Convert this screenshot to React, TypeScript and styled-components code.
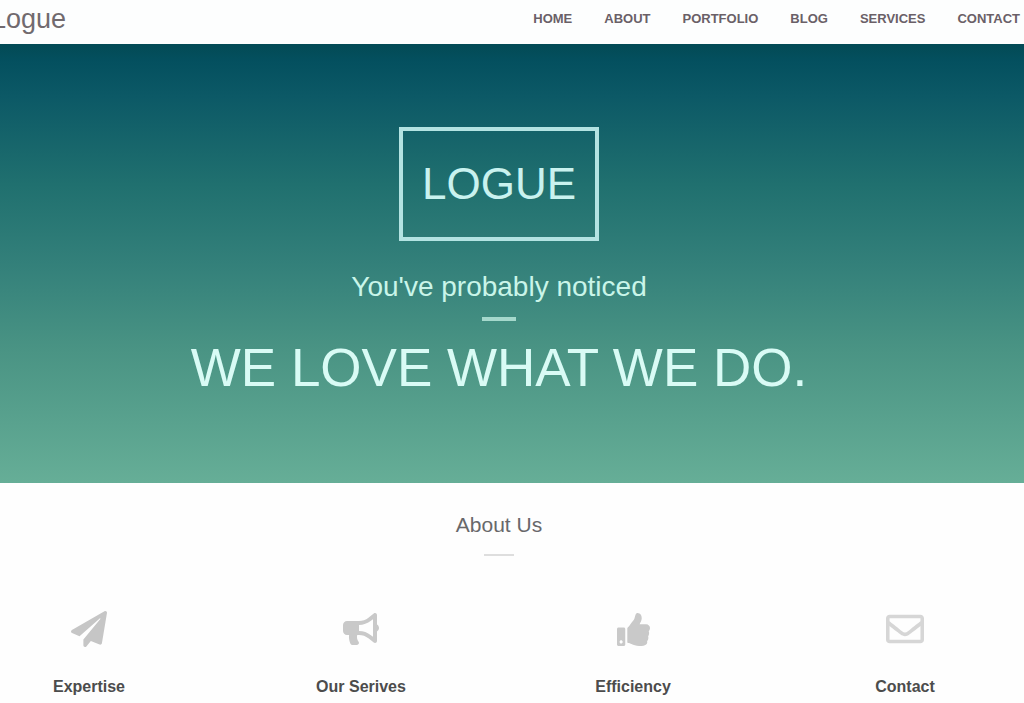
import React from "react";
import styled, { createGlobalStyle } from "styled-components";
import { FaPaperPlane, FaBullhorn, FaThumbsUp, FaRegEnvelope } from "react-icons/fa";

const GlobalStyle = createGlobalStyle`
  * { box-sizing: border-box; }
  body {
    margin: 0;
    overflow-x: hidden;
    background: #fefefe;
    font-family: "Liberation Sans", Arial, sans-serif;
  }
`;

const Page = styled.div`
  overflow: hidden;
`;

const Header = styled.header`
  display: flex;
  align-items: center;
  justify-content: space-between;
  height: 44px;
  padding: 0 4px 7px 0;
  background: #fdfefe;
`;

const Brand = styled.a`
  margin-left: -9px;
  color: #716a6e;
  font-size: 27px;
  line-height: 36px;
  text-decoration: none;
`;

const Nav = styled.nav`
  display: flex;
  gap: 32px;
`;

const NavLink = styled.a`
  color: #6a6067;
  font-size: 13px;
  font-weight: 700;
  line-height: 16px;
  text-decoration: none;
`;

const Hero = styled.section`
  display: flex;
  flex-direction: column;
  align-items: center;
  padding: 83px 26px 83px 0;
  color: #d9fbf5;
  text-align: center;
  background: linear-gradient(#034a55 0%, #04505f 4%, #0c5966 12%, #20706f 32%, #33807a 50%, #4a9484 70%, #66ae97 100%);
`;

const LogoBox = styled.div`
  padding: 29px 19px;
  border: 4px solid #b3e3e2;
  color: #c9f2ef;
  font-size: 44px;
  line-height: 48px;
`;

const Tagline = styled.p`
  margin: 29px 0 13px;
  color: #c9f5e9;
  font-size: 28px;
  line-height: 34px;
`;

const Rule = styled.hr<{ $color: string; $width: number; $thickness: number }>`
  width: ${(p) => p.$width}px;
  height: ${(p) => p.$thickness}px;
  margin: 0;
  border: 0;
  background: ${(p) => p.$color};
`;

const Headline = styled.h1`
  margin: 15px 0 0;
  font-size: 53px;
  font-weight: 400;
  line-height: 64px;
`;

const About = styled.section`
  display: flex;
  flex-direction: column;
  align-items: center;
  padding: 30px 26px 0 0;
`;

const AboutTitle = styled.h2`
  margin: 0 0 17px;
  color: #68686a;
  font-size: 21px;
  font-weight: 400;
  line-height: 24px;
`;

const Features = styled.ul`
  display: grid;
  grid-template-columns: repeat(4, 1fr);
  margin: 54px -17px 0 -47px;
  padding: 0;
  list-style: none;
`;

const Feature = styled.li`
  display: flex;
  flex-direction: column;
  align-items: center;
  gap: 30px;
`;

const FeatureIcon = styled.span<{ $color: string }>`
  display: flex;
  align-items: center;
  height: 38px;
  color: ${(p) => p.$color};
`;

const FeatureName = styled.h3`
  margin: 0;
  color: #4c4c4c;
  font-size: 16px;
  line-height: 18px;
`;

const links = ["HOME", "ABOUT", "PORTFOLIO", "BLOG", "SERVICES", "CONTACT"];

const features = [
  { name: "Expertise", Icon: FaPaperPlane, size: 36, color: "#c6c6c6" },
  { name: "Our Serives", Icon: FaBullhorn, size: 36, color: "#c9c9c9" },
  { name: "Efficiency", Icon: FaThumbsUp, size: 33, color: "#c9c9c9" },
  { name: "Contact", Icon: FaRegEnvelope, size: 38, color: "#d6d6d6" },
];

export default function App() {
  return (
    <Page>
      <GlobalStyle />
      <Header>
        <Brand href="#home">Logue</Brand>
        <Nav>
          {links.map((label) => (
            <NavLink key={label} href={`#${label.toLowerCase()}`}>{label}</NavLink>
          ))}
        </Nav>
      </Header>
      <Hero id="home">
        <LogoBox>LOGUE</LogoBox>
        <Tagline>You've probably noticed</Tagline>
        <Rule $color="#a5d8cc" $width={34} $thickness={4} />
        <Headline>WE LOVE WHAT WE DO.</Headline>
      </Hero>
      <About id="about">
        <AboutTitle>About Us</AboutTitle>
        <Rule $color="#dedede" $width={30} $thickness={2} />
      </About>
      <Features id="services">
        {features.map(({ name, Icon, size, color }) => (
          <Feature key={name}>
            <FeatureIcon $color={color}>
              <Icon size={size} aria-hidden="true" />
            </FeatureIcon>
            <FeatureName>{name}</FeatureName>
          </Feature>
        ))}
      </Features>
    </Page>
  );
}
